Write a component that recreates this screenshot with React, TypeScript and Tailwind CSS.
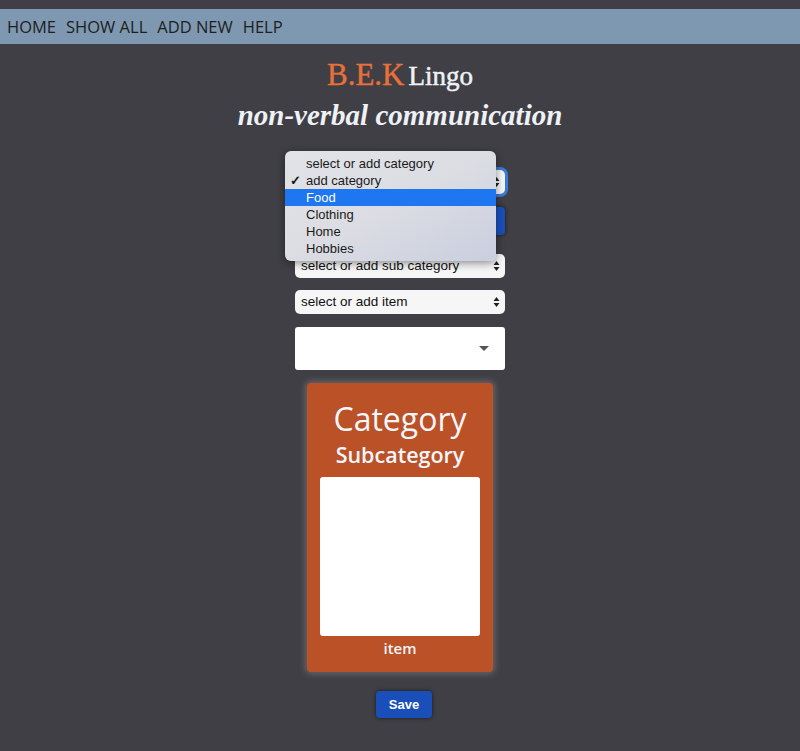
import React from "react";

const sans = { fontFamily: '"Liberation Sans", Arial, sans-serif' };

function Arrows() {
  return (
    <svg width="7" height="12" viewBox="0 0 7 12" className="shrink-0">
      <path d="M3.5 1 L6.5 5 L0.5 5 Z" fill="#222" />
      <path d="M3.5 11 L6.5 7 L0.5 7 Z" fill="#222" />
    </svg>
  );
}

function FakeSelect({ label, focus }: { label: string; focus?: boolean }) {
  return (
    <div
      className={`flex h-[24px] w-[210px] items-center justify-between rounded-[5px] bg-[#f6f6f6] pl-[6px] pr-[5px] text-[13.5px] text-[#111] ${
        focus ? "ring-[3px] ring-[#3b7bd8]" : ""
      }`}
      style={sans}
    >
      <span>{label}</span>
      <Arrows />
    </div>
  );
}

export default function App() {
  const options = ["select or add category", "add category", "Food", "Clothing", "Home", "Hobbies"];

  return (
    <div className="min-h-[751px] w-full bg-[#3f3f45] pt-[9px]" style={{ fontFamily: '"Open Sans", sans-serif' }}>
      {/* Nav */}
      <nav className="flex h-[35px] items-center gap-[10px] bg-[#7d98b0] pl-[7px] pt-[1px] text-[16.5px] text-[#1e1e1e]">
        <span>HOME</span>
        <span>SHOW ALL</span>
        <span>ADD NEW</span>
        <span>HELP</span>
      </nav>

      {/* Title */}
      <div className="mt-[14px] text-center" style={{ fontFamily: '"Liberation Serif", "DejaVu Serif", serif' }}>
        <div className="leading-[34px]">
          <span className="text-[31px] text-[#e8703a] [-webkit-text-stroke:0.4px_#e8703a]">B.E.K</span>{" "}
          <span className="text-[27px] text-[#eef1f6] [-webkit-text-stroke:0.5px_#eef1f6]">Lingo</span>
        </div>
        <div className="mt-[1px] text-[29px] font-bold italic leading-[34px] text-[#eef1f6]">
          non-verbal communication
        </div>
      </div>

      {/* Form */}
      <div className="relative mx-auto mt-[38px] flex w-[210px] flex-col items-center">
        <FakeSelect label="select or add category" focus />
        <div className="mt-[13px] h-[28px] w-[210px] rounded-[4px] bg-[#1a4fba] shadow-[0_0_4px_rgba(0,0,0,0.6)]" />
        <div className="mt-[19px]">
          <FakeSelect label="select or add sub category" />
        </div>
        <div className="mt-[12px]">
          <FakeSelect label="select or add item" />
        </div>
        <div className="mt-[13px] flex h-[43px] w-[210px] items-center justify-end rounded-[3px] bg-white pr-[16px]">
          <svg width="10" height="6" viewBox="0 0 10 6">
            <path d="M0 0 L10 0 L5 5 Z" fill="#555" />
          </svg>
        </div>

        {/* Card */}
        <div className="mt-[13px] flex h-[289px] w-[186px] flex-col items-center rounded-[4px] bg-[#bb5127] shadow-[0_0_6px_2px_rgba(150,150,150,0.45)]">
          <div className="mt-[16px] text-[32px] font-medium leading-[40px] text-[#f3f6fb]">Category</div>
          <div className="mt-[1px] text-[21.5px] font-semibold leading-[30px] text-[#f3f6fb]">Subcategory</div>
          <div className="mt-[7px] h-[159px] w-[160px] rounded-[3px] bg-white" />
          <div className="mt-[1px] text-[15px] font-semibold text-[#f3f6fb]">item</div>
        </div>

        <button
          className="ml-[8px] mt-[19px] h-[27px] w-[56px] rounded-[4px] bg-[#1a4fba] text-[13px] font-bold text-white shadow-[0_0_4px_rgba(0,0,0,0.6)]"
          style={sans}
        >
          Save
        </button>

        {/* Open dropdown menu */}
        <div
          className="absolute left-[-10px] top-[-19px] w-[211px] rounded-[6px] bg-gradient-to-br from-[#e2e3e7] via-[#dcdde3] to-[#c9cfdf] py-[4px] text-[13px] text-[#1a1a1a] shadow-[0_2px_8px_rgba(0,0,0,0.45)]"
          style={sans}
        >
          {options.map((o, i) => (
            <div
              key={o}
              className={`relative flex h-[17px] items-center pl-[21px] ${i === 2 ? "bg-[#1e76f0] text-white" : ""}`}
            >
              {i === 1 && <span className="absolute left-[5px] text-[13px] font-bold">✓</span>}
              {o}
            </div>
          ))}
        </div>
      </div>
    </div>
  );
}
